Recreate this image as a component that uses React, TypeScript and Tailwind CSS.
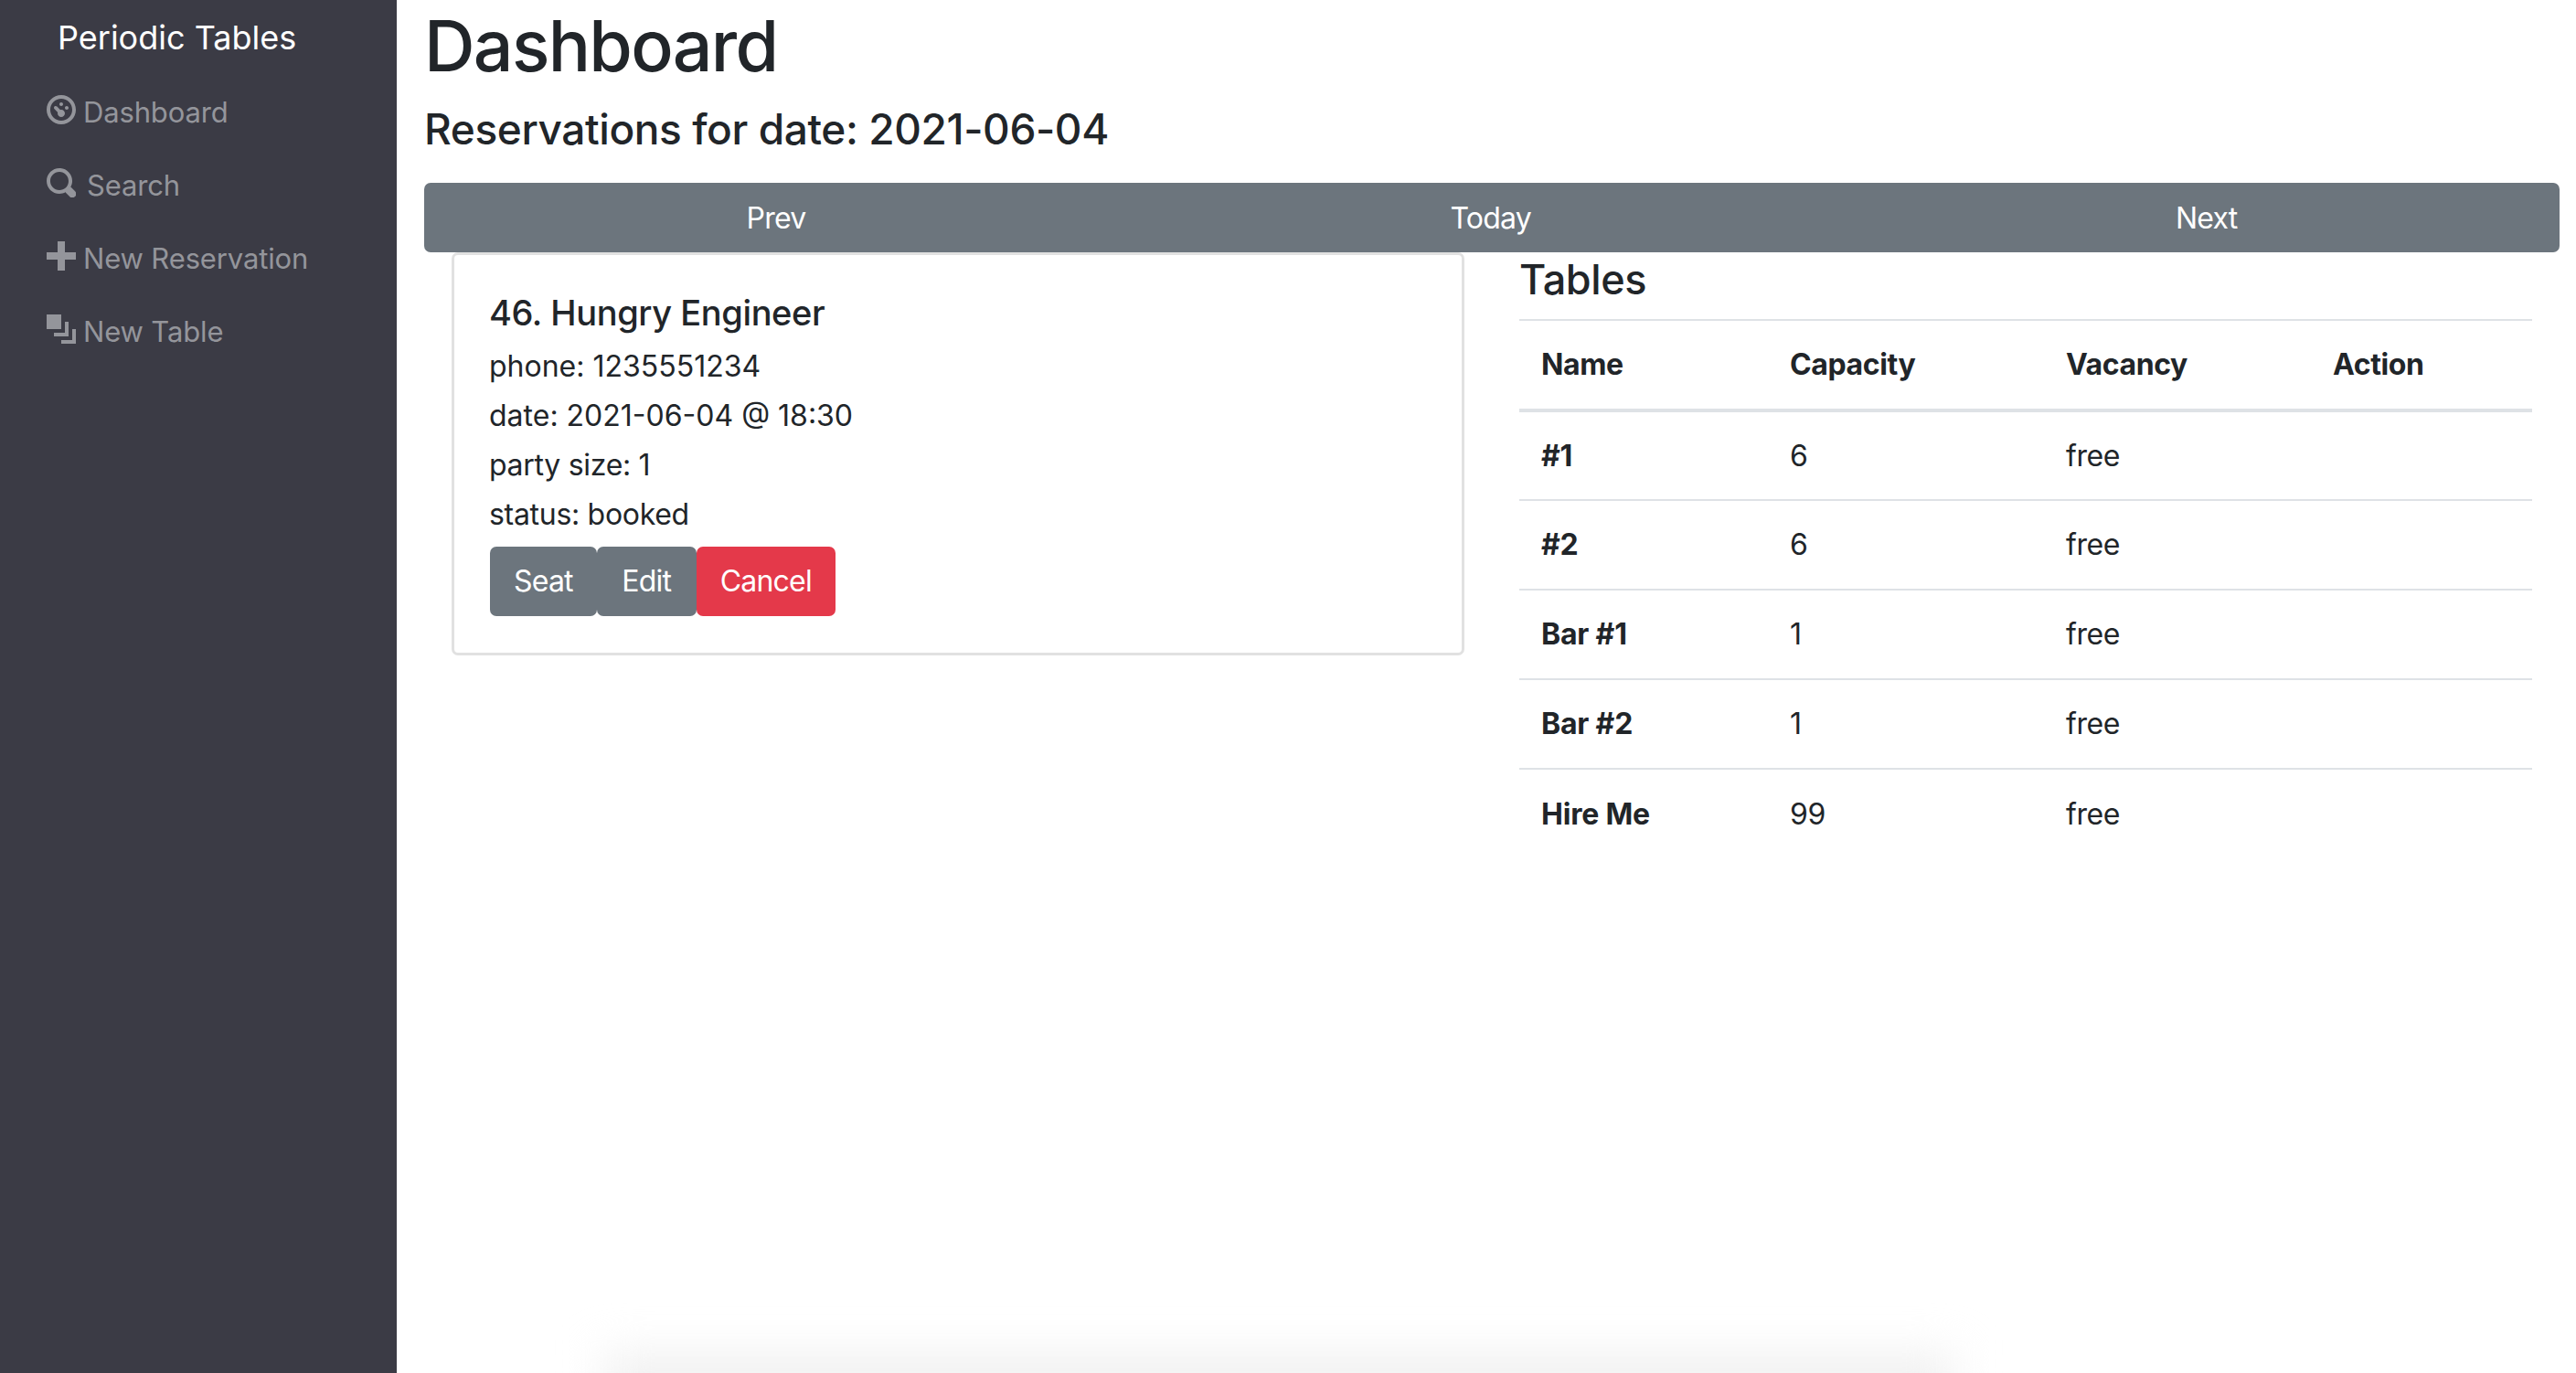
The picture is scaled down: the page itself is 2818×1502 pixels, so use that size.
const font = "[font-family:Inter,'Liberation_Sans',sans-serif]";

function DashboardIcon() {
  return (
    <svg viewBox="0 0 8 8" className="w-8 h-8 -mt-1 fill-current shrink-0">
      <path d="M4 0c-2.2 0-4 1.8-4 4s1.8 4 4 4 4-1.8 4-4-1.8-4-4-4zm0 1c1.66 0 3 1.34 3 3s-1.34 3-3 3-3-1.34-3-3 1.34-3 3-3zm0 1c-.28 0-.5.22-.5.5s.22.5.5.5.5-.22.5-.5-.22-.5-.5-.5zm-1.66 1a.5.5 0 0 0-.19.84l.91.91c-.02.08-.06.16-.06.25 0 .55.45 1 1 1s1-.45 1-1-.45-1-1-1c-.09 0-.17.04-.25.06l-.91-.91a.5.5 0 0 0-.44-.16.5.5 0 0 0-.06 0zm3.16 0c-.28 0-.5.22-.5.5s.22.5.5.5.5-.22.5-.5-.22-.5-.5-.5z" />
    </svg>
  );
}

function SearchIcon() {
  return (
    <svg viewBox="0 0 8 8" className="w-8 h-8 -mt-1 fill-current shrink-0">
      <path d="M3.5 0c-1.93 0-3.5 1.57-3.5 3.5s1.57 3.5 3.5 3.5c.59 0 1.17-.14 1.66-.41a1 1 0 0 0 .13.13l1 1a1.02 1.02 0 1 0 1.44-1.44l-1-1a1 1 0 0 0-.16-.13c.27-.49.44-1.06.44-1.66 0-1.93-1.57-3.5-3.5-3.5zm0 1c1.39 0 2.5 1.11 2.5 2.5 0 .66-.24 1.27-.66 1.72-.01.01-.02.02-.03.03a1 1 0 0 0-.13.13c-.44.4-1.04.63-1.69.63-1.39 0-2.5-1.11-2.5-2.5s1.11-2.5 2.5-2.5z" />
    </svg>
  );
}

function PlusIcon() {
  return (
    <svg viewBox="0 0 8 8" className="w-8 h-8 -mt-1 fill-current shrink-0">
      <path d="M3 0v3h-3v2h3v3h2v-3h3v-2h-3v-3h-2z" />
    </svg>
  );
}

function LayersIcon() {
  return (
    <svg viewBox="0 0 8 8" className="w-8 h-8 -mt-1 fill-current shrink-0">
      <path d="M0 0v4h4v-4h-4zm5 2v3h-3v1h4v-4h-1zm2 2v3h-3v1h4v-4h-1z" />
    </svg>
  );
}

const navItems = [
  { icon: DashboardIcon, label: 'Dashboard', gap: 'gap-2' },
  { icon: SearchIcon, label: 'Search', gap: 'gap-3' },
  { icon: PlusIcon, label: 'New Reservation', gap: 'gap-2' },
  { icon: LayersIcon, label: 'New Table', gap: 'gap-2' }
];

const tables = [
  { name: '#1', capacity: 6 },
  { name: '#2', capacity: 6 },
  { name: 'Bar #1', capacity: 1 },
  { name: 'Bar #2', capacity: 1 },
  { name: 'Hire Me', capacity: 99 }
];

function Sidebar() {
  return (
    <aside className="w-[434px] shrink-0 bg-[#3b3b45] min-h-[1502px]">
      <div className="pl-[63px] pt-[21px] h-[82px] text-[36px] leading-[40px] text-white">Periodic Tables</div>
      <nav className="flex flex-col pl-[51px]">
        {navItems.map((item) => {
          const Icon = item.icon;
          return (
            <div key={item.label} className={`flex items-center h-[80px] text-[31px] tracking-[-0.15px] text-[#94959b] ${item.gap}`}>
              <Icon />
              <span className="pt-[2px]">{item.label}</span>
            </div>
          );
        })}
      </nav>
    </aside>
  );
}

function ReservationCard() {
  return (
    <div className="ml-[30px] w-[1108px] h-[441px] border-[3px] border-[#e1e1e1] rounded-[7px] pl-[38px] pt-[36px] bg-white">
      <h5 className="text-[38px] leading-[54px] tracking-[-0.4px] font-medium text-[#212529]">46. Hungry Engineer</h5>
      <div className="text-[32px] leading-[54px] text-[#212529] mt-[5px]">
        <p>phone: 1235551234</p>
        <p>date: 2021-06-04 @ 18:30</p>
        <p className="tracking-[-0.3px]">party size: 1</p>
        <p className="tracking-[-0.3px]">status: booked</p>
      </div>
      <div className="flex ml-[1px] mt-[8px] text-[32px] tracking-[-0.8px] text-white">
        <button className="h-[76px] px-[26px] bg-[#6c757d] rounded-[7px]">Seat</button>
        <button className="h-[76px] px-[26px] w-[109px] bg-[#6c757d] rounded-[7px]">Edit</button>
        <button className="h-[76px] px-[26px] bg-[#e4394a] rounded-[7px]">Cancel</button>
      </div>
    </div>
  );
}

function TablesPanel() {
  return (
    <div className="ml-[60px] w-[1108px]">
      <h4 className="h-[73px] text-[45px] leading-[60px] tracking-[-0.4px] font-medium text-[#212529]">Tables</h4>
      <table className="w-full border-collapse table-fixed text-[32px] tracking-[-0.4px] text-[#212529]">
        <thead>
          <tr className="h-[99px] border-t-2 border-b-4 border-[#dee2e6] text-left font-bold">
            <th className="pl-6 w-[272px]">Name</th>
            <th className="pl-6 w-[302px]">Capacity</th>
            <th className="pl-6 w-[292px]">Vacancy</th>
            <th className="pl-6">Action</th>
          </tr>
        </thead>
        <tbody>
          {tables.map((table, index) => (
            <tr key={table.name} className={index > 0 ? 'h-[98px] border-t-2 border-[#dee2e6]' : 'h-[98px]'}>
              <th className="pl-6 text-left font-bold tracking-[-0.2px]">{table.name}</th>
              <td className="pl-6">{table.capacity}</td>
              <td className="pl-6">free</td>
              <td className="pl-6"></td>
            </tr>
          ))}
        </tbody>
      </table>
    </div>
  );
}

export default function App() {
  return (
    <div className={`relative flex h-[1502px] overflow-hidden bg-white ${font}`}>
      <Sidebar />
      <main className="flex-1 pl-[30px] pr-[18px]">
        <h1 className="pt-[4px] h-[96px] text-[77px] leading-[92px] tracking-[-1.7px] font-medium text-[#212529]">Dashboard</h1>
        <h4 className="h-[104px] pt-[14px] text-[46px] leading-[62px] tracking-[-0.4px] font-medium text-[#212529]">Reservations for date: 2021-06-04</h4>
        <div className="flex h-[76px] bg-[#6c757d] rounded-[7px] text-[32px] tracking-[-0.8px] text-white">
          <button className="flex-auto pt-[2px]">Prev</button>
          <button className="flex-auto pt-[2px]">Today</button>
          <button className="flex-auto pt-[2px]">Next</button>
        </div>
        <div className="flex items-start">
          <ReservationCard />
          <TablesPanel />
        </div>
      </main>
      {/* faint shadow along the bottom edge */}
      <div className="absolute left-[660px] right-[680px] bottom-[-40px] h-[60px] bg-[#f0f0f0] blur-[24px]" />
    </div>
  );
}
